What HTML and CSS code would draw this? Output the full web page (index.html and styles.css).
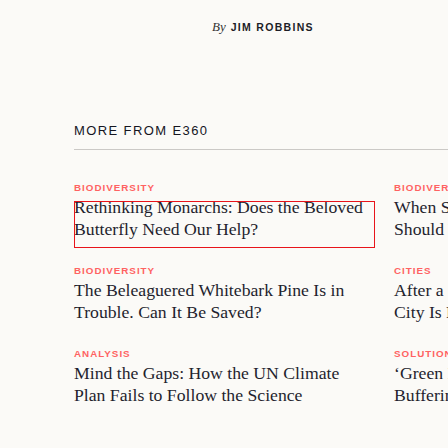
FILE: index.html
```html
<!DOCTYPE html>
<html lang="en">
<head>
<meta charset="utf-8">
<title>More from E360</title>
<link rel="stylesheet" href="styles.css">
</head>
<body>
<div class="page">
  <p class="byline"><span class="by">By</span> <span class="author">JIM ROBBINS</span></p>

  <section class="more">
    <h2 class="more-title">MORE FROM E360</h2>
    <div class="grid">
      <article class="item">
        <div class="cat">BIODIVERSITY</div>
        <h3 class="title focused">Rethinking Monarchs: Does the Beloved Butterfly Need Our Help?</h3>
      </article>
      <article class="item">
        <div class="cat">BIODIVERSITY</div>
        <h3 class="title">When Salmon Runs Collapse on Rivers, Should We Step In to Save Them?</h3>
      </article>
      <article class="item">
        <div class="cat">BIODIVERSITY</div>
        <h3 class="title">Why Grizzly Bears Are Returning to Their Old Haunts in the West</h3>
      </article>

      <article class="item">
        <div class="cat">BIODIVERSITY</div>
        <h3 class="title">The Beleaguered Whitebark Pine Is in Trouble. Can It Be Saved?</h3>
      </article>
      <article class="item">
        <div class="cat">CITIES</div>
        <h3 class="title">After a Fire, How a Californian Mountain City Is Fighting to Rebuild</h3>
      </article>
      <article class="item">
        <div class="cat">CITIES</div>
        <h3 class="title">How Urban Trees Can Cool Down Overheated Neighborhoods</h3>
      </article>

      <article class="item">
        <div class="cat">ANALYSIS</div>
        <h3 class="title">Mind the Gaps: How the UN Climate Plan Fails to Follow the Science</h3>
      </article>
      <article class="item">
        <div class="cat">SOLUTIONS</div>
        <h3 class="title">‘Green Infrastructure’ Along Coasts Is Buffering Cities from Storms</h3>
      </article>
      <article class="item">
        <div class="cat">SOLUTIONS</div>
        <h3 class="title">The Quiet Revival of Wetlands Across the American Midwest</h3>
      </article>
    </div>
  </section>
</div>
</body>
</html>
```

FILE: styles.css
```css
html, body {
  margin: 0;
  padding: 0;
  background: #fbfaf7;
  overflow: hidden;
}

.page {
  width: 448px;
  height: 448px;
  overflow: hidden;
  color: #1d1d27;
}

.byline {
  margin: 0;
  padding: 18px 0 0 212px;
  line-height: 16px;
  white-space: nowrap;
}

.by {
  font-family: "Liberation Serif", serif;
  font-style: italic;
  font-size: 13px;
  color: #333;
}

.author {
  font-family: "Liberation Sans", sans-serif;
  font-weight: bold;
  font-size: 10.5px;
  letter-spacing: 1.3px;
  margin-left: 1px;
}

.more {
  margin-left: 74px;
  margin-top: 88px;
}

.more-title {
  margin: 0;
  font-family: "Liberation Sans", sans-serif;
  font-weight: normal;
  font-size: 13px;
  line-height: 16px;
  letter-spacing: 1.4px;
  color: #15151f;
  padding-bottom: 10px;
  border-bottom: 1px solid #cbc9c6;
}

.grid {
  display: grid;
  grid-template-columns: repeat(3, 300px);
  column-gap: 20px;
  row-gap: 25px;
  padding-top: 32px;
}

.cat {
  font-family: "Liberation Sans", sans-serif;
  font-weight: bold;
  font-size: 9.8px;
  line-height: 12px;
  letter-spacing: 1px;
  color: #ff6262;
  margin-bottom: 2px;
  white-space: nowrap;
}

.title {
  margin: 0;
  font-family: "Liberation Serif", serif;
  font-weight: normal;
  font-size: 17.7px;
  line-height: 22px;
  color: #1f1f2e;
}

.focused {
  position: relative;
}

.focused::after {
  content: "";
  position: absolute;
  left: 0;
  top: 5px;
  width: 299px;
  height: 45px;
  border: 1px solid #e8141b;
}
```
